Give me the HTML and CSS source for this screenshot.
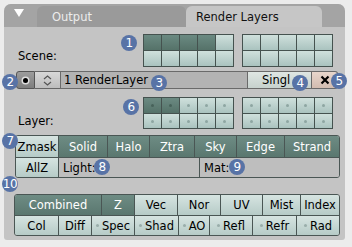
FILE: index.html
```html
<!DOCTYPE html>
<html>
<head>
<meta charset="utf-8">
<link rel="stylesheet" href="styles.css">
</head>
<body>
<div class="panel">
  <div class="header">
    <div class="tri-box"><span class="tri"></span></div>
    <div class="tab tab-inactive">Output</div>
    <div class="tab tab-active">Render Layers</div>
    <div class="header-rest"></div>
  </div>
  <div class="content">
    <div class="row scene-row">
      <div class="label">Scene:</div>
      <div class="grids">
        <div class="grid">
          <div class="cell on"></div><div class="cell on"></div><div class="cell on"></div><div class="cell on"></div><div class="cell"></div>
          <div class="cell"></div><div class="cell"></div><div class="cell"></div><div class="cell"></div><div class="cell"></div>
        </div>
        <div class="grid">
          <div class="cell"></div><div class="cell"></div><div class="cell"></div><div class="cell"></div><div class="cell"></div>
          <div class="cell"></div><div class="cell"></div><div class="cell"></div><div class="cell"></div><div class="cell"></div>
        </div>
      </div>
    </div>

    <div class="row rl-row">
      <div class="btn-dot"><span class="dot"></span></div>
      <div class="btn-arrows">
        <svg width="9" height="11" viewBox="0 0 9 11"><path d="M1 4 L4.5 1 L8 4" fill="none" stroke="#555" stroke-width="1.2"/><path d="M1 7 L4.5 10 L8 7" fill="none" stroke="#555" stroke-width="1.2"/></svg>
      </div>
      <div class="rl-field">1 RenderLayer</div>
      <div class="btn-singl">Singl</div>
      <div class="btn-x">
        <svg width="10" height="10" viewBox="0 0 10 10"><path d="M1.5 1.5 L8.5 8.5 M8.5 1.5 L1.5 8.5" stroke="#000" stroke-width="2.2"/></svg>
      </div>
    </div>

    <div class="row layer-row">
      <div class="label">Layer:</div>
      <div class="grids">
        <div class="grid dots">
          <div class="cell on"></div><div class="cell on"></div><div class="cell"></div><div class="cell"></div><div class="cell"></div>
          <div class="cell"></div><div class="cell"></div><div class="cell"></div><div class="cell"></div><div class="cell"></div>
        </div>
        <div class="grid dots">
          <div class="cell"></div><div class="cell"></div><div class="cell"></div><div class="cell"></div><div class="cell"></div>
          <div class="cell"></div><div class="cell"></div><div class="cell"></div><div class="cell"></div><div class="cell"></div>
        </div>
      </div>
    </div>

    <div class="block block1">
      <div class="brow">
        <div class="b light" style="width:42px">Zmask</div>
        <div class="b dark" style="width:49px">Solid</div>
        <div class="b dark" style="width:42px">Halo</div>
        <div class="b dark" style="width:45px">Ztra</div>
        <div class="b dark" style="width:42px">Sky</div>
        <div class="b dark" style="width:48px">Edge</div>
        <div class="b dark" style="width:55px">Strand</div>
      </div>
      <div class="brow">
        <div class="b light" style="width:42px">AllZ</div>
        <div class="b field" style="width:141px">Light:</div>
        <div class="b field" style="width:140px">Mat:</div>
      </div>
    </div>

    <div class="block block2">
      <div class="brow">
        <div class="b dark" style="width:86px">Combined</div>
        <div class="b dark" style="width:33px">Z</div>
        <div class="b light" style="width:43px">Vec</div>
        <div class="b light" style="width:43px">Nor</div>
        <div class="b light" style="width:42px">UV</div>
        <div class="b light" style="width:38px">Mist</div>
        <div class="b light" style="width:39px">Index</div>
      </div>
      <div class="brow">
        <div class="b light" style="width:43px">Col</div>
        <div class="b light" style="width:33px">Diff</div>
        <div class="b light tog" style="width:43px">Spec</div>
        <div class="b light tog" style="width:44px">Shad</div>
        <div class="b light tog" style="width:31px">AO</div>
        <div class="b light tog" style="width:43px">Refl</div>
        <div class="b light tog" style="width:44px">Refr</div>
        <div class="b light tog" style="width:43px">Rad</div>
      </div>
    </div>
  </div>

  <span class="badge" style="left:129px;top:43px">1</span>
  <span class="badge" style="left:10px;top:82px">2</span>
  <span class="badge" style="left:159px;top:83px">3</span>
  <span class="badge" style="left:300px;top:83px">4</span>
  <span class="badge" style="left:339px;top:81px">5</span>
  <span class="badge" style="left:131px;top:107px">6</span>
  <span class="badge" style="left:10px;top:141px">7</span>
  <span class="badge" style="left:102px;top:167px">8</span>
  <span class="badge" style="left:237px;top:167px">9</span>
  <span class="badge" style="left:10px;top:184px">10</span>
</div>
</body>
</html>
```

FILE: styles.css
```css
html, body {
  margin: 0;
  padding: 0;
  background: #ececec;
  width: 352px;
  height: 247px;
  overflow: hidden;
  font-family: "DejaVu Sans", sans-serif;
  font-size: 11px;
  color: #000;
}

.panel {
  position: absolute;
  left: 4px;
  top: 4px;
  width: 341px;
  height: 236px;
  border-radius: 7px 7px 3px 3px;
  background: #c4c4c4;
  overflow: visible;
}

.header {
  height: 23px;
  display: flex;
  align-items: flex-end;
  background: #a4a4a4;
  border-radius: 7px 7px 0 0;
}

.tri-box {
  width: 33px;
  height: 23px;
  display: flex;
  align-items: center;
  justify-content: center;
}

.tri {
  width: 0;
  height: 0;
  border-left: 5px solid transparent;
  border-right: 5px solid transparent;
  border-top: 8px solid #fff;
  margin-top: -6px;
  margin-left: -4px;
}

.tab {
  height: 21px;
  display: flex;
  align-items: center;
  border-radius: 6px 6px 0 0;
  font-size: 11.5px;
}

.tab-inactive {
  width: 149px;
  padding-left: 15px;
  box-sizing: border-box;
  background: #9a9a9a;
  color: #ececec;
}

.tab-active {
  width: 136px;
  padding-left: 10px;
  box-sizing: border-box;
  background: #c6c6c6;
  color: #111;
}

.header-rest {
  flex: 1;
  height: 23px;
}

.content {
  padding: 7px 0 0 11px;
  display: flex;
  flex-direction: column;
}

.row {
  display: flex;
}

.label {
  width: 128px;
  align-self: flex-end;
  padding-left: 3px;
  box-sizing: border-box;
  font-size: 11.5px;
}

.scene-row .label {
  margin-bottom: 4px;
}

.layer-row .label {
  margin-bottom: 1px;
}

.grids {
  display: flex;
  gap: 8px;
}

.grid {
  display: grid;
  grid-template-columns: repeat(5, 17px);
  grid-template-rows: repeat(2, 15px);
  gap: 1px;
  padding: 1px;
  background: #45524f;
}

.layer-row .grid {
  grid-template-rows: 15px 14px;
}

.cell {
  background: linear-gradient(#cfe0dc, #aac3bf);
  position: relative;
}

.cell.on {
  background: linear-gradient(#6b8a82, #557269);
}

.dots .cell::after {
  content: "";
  position: absolute;
  left: 7px;
  top: 6px;
  width: 3px;
  height: 3px;
  border-radius: 50%;
  background: #8ea6a2;
}

.dots .cell.on::after {
  background: #47625a;
}

.rl-row {
  margin-top: 4px;
  height: 18px;
  margin-left: 1px;
}

.btn-dot {
  width: 19px;
  height: 18px;
  background: linear-gradient(#9c9c9c, #7e7e7e);
  border: 1px solid #555;
  box-sizing: border-box;
  border-radius: 3px 0 0 3px;
  display: flex;
  align-items: center;
  justify-content: center;
}

.dot {
  width: 5px;
  height: 5px;
  border-radius: 50%;
  background: #000;
  box-shadow: 0 0 0 1.5px #ddd;
}

.btn-arrows {
  width: 25px;
  height: 18px;
  background: linear-gradient(#d8d8d8, #bdbdbd);
  border-top: 1px solid #666;
  border-bottom: 1px solid #666;
  box-sizing: border-box;
  display: flex;
  align-items: center;
  justify-content: center;
}

.rl-field {
  width: 188px;
  height: 18px;
  background: #b3b3b3;
  border: 1px solid #6a6a6a;
  box-sizing: border-box;
  padding-left: 3px;
  display: flex;
  align-items: center;
  font-size: 11.5px;
}

.btn-singl {
  width: 64px;
  height: 18px;
  background: linear-gradient(#dfe6e3, #c6d1cd);
  border: 1px solid #6a6a6a;
  border-left: none;
  box-sizing: border-box;
  padding-left: 14px;
  display: flex;
  align-items: center;
  font-size: 11.5px;
}

.btn-x {
  width: 26px;
  height: 18px;
  background: linear-gradient(#e8d6cc, #d2bcb0);
  border: 1px solid #6a6a6a;
  border-left: none;
  border-radius: 0 3px 3px 0;
  box-sizing: border-box;
  display: flex;
  align-items: center;
  justify-content: center;
}

.layer-row {
  margin-top: 8px;
}

.block {
  display: flex;
  flex-direction: column;
  border: 1px solid #4a5654;
  border-radius: 3px;
  align-self: flex-start;
  overflow: hidden;
}

.block1 {
  margin-top: 6px;
}

.block2 {
  margin-top: 16px;
  margin-left: -1px;
}

.brow {
  display: flex;
}

.block1 .brow:first-child .b { height: 21px; }
.block1 .brow:last-child .b { height: 20px; }
.block2 .brow .b { height: 20px; }

.brow + .brow .b {
  border-top: 1px solid #4a5654;
}

.b {
  box-sizing: border-box;
  display: flex;
  align-items: center;
  justify-content: center;
  border-left: 1px solid #4a5654;
  font-size: 11.5px;
  position: relative;
}

.brow .b:first-child {
  border-left: none;
}

.b.dark {
  background: linear-gradient(#6e8c84, #5a776f);
  color: #fff;
}

.b.light {
  background: linear-gradient(#d6e4e1, #b6cbc7);
  color: #000;
}

.b.field {
  background: #bebebe;
  justify-content: flex-start;
  padding-left: 4px;
}

.b.tog::before {
  content: "";
  width: 3px;
  height: 3px;
  border-radius: 50%;
  background: #9aaeab;
  margin-right: 3px;
}

.badge {
  position: absolute;
  width: 16px;
  height: 16px;
  border-radius: 50%;
  background: #5873a6;
  color: #fff;
  font-size: 12px;
  line-height: 16px;
  text-align: center;
  margin-left: -12px;
  margin-top: -12px;
  letter-spacing: -0.5px;
}
```
